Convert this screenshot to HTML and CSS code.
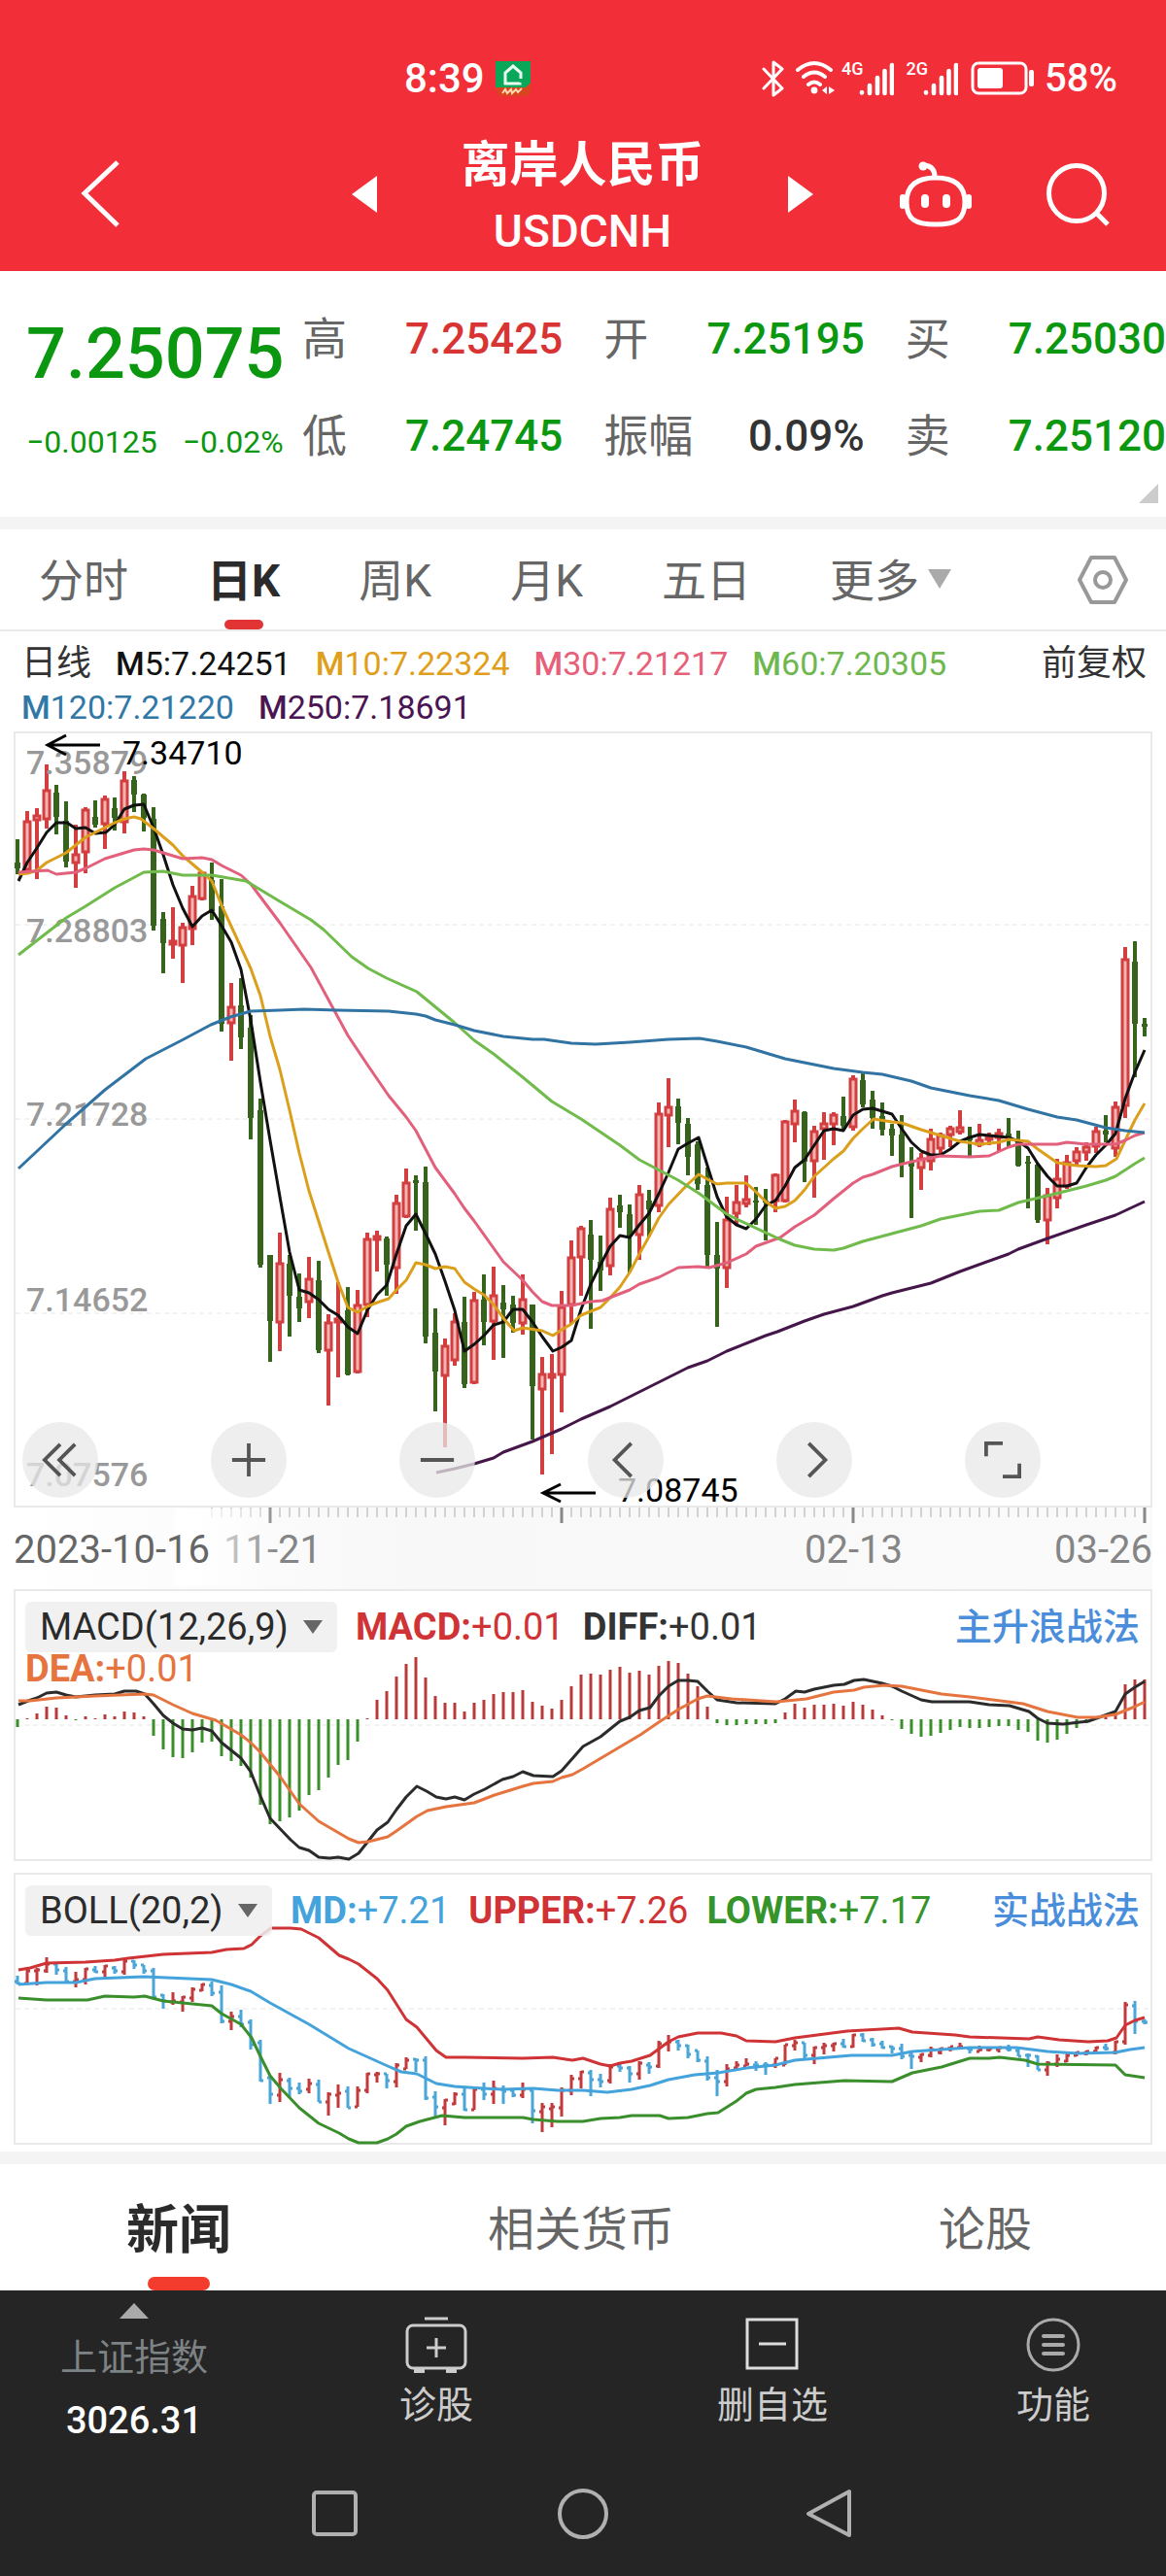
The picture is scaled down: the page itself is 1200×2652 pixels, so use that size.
FILE: index.html
```html
<!DOCTYPE html>
<html lang="zh-CN">
<head>
<meta charset="utf-8">
<meta name="viewport" content="width=device-width, initial-scale=1">
<title>离岸人民币 USDCNH</title>
<link rel="stylesheet" href="styles.css">
</head>
<body>
<header class="top">
  <div class="status">
    <span class="clock">8:39</span>
    <svg class="app-badge" viewBox="0 0 38 40" width="38" height="40"><path fill="#0aa65a" d="M1 2h36v28H1z"/><path fill="none" stroke="#e9fff3" stroke-width="3" d="M26 24v1H11V14l8-7 8 7v6"/><path fill="#d9431f" d="M1 29h31l5-5v10l-5 4H5z"/><path fill="none" stroke="#ffd9b0" stroke-width="2" d="M8 35l3-4 2 4 4-4 1 4 4-4 2 3 4-4"/></svg>
    <div class="status-icons">
      <svg viewBox="0 0 24 38" width="24" height="38" fill="none" stroke="#fff" stroke-width="3" stroke-linejoin="round" stroke-linecap="round"><path d="M2 9l19 20-9 7V2l9 7L2 29"/></svg>
      <svg class="wifi" viewBox="0 0 42 38" width="42" height="38" fill="none" stroke="#fff" stroke-width="4" stroke-linecap="round"><path d="M3 10q17-14 34 0M9 17q11-9 22 0M14 25q6-5 12 0"/><circle cx="20" cy="31" r="3.4" fill="#fff" stroke="none"/><path fill="#fff" stroke="none" d="M28 31l5-4v8zM35 27l6 4-6 4z"/></svg>
      <span class="net">4G</span>
      <svg class="bars" viewBox="0 0 36 36" width="36" height="36" stroke="#fff" stroke-width="4.6" stroke-linecap="round"><path d="M3 32v.5M11 25v8M19 17v16M26.500 10v23M34 4v29"/></svg>
      <span class="net">2G</span>
      <svg class="bars" viewBox="0 0 36 36" width="36" height="36" stroke="#fff" stroke-width="4.6" stroke-linecap="round"><path d="M3 32v.5M11 25v8M19 17v16M26.500 10v23M34 4v29"/></svg>
      <svg class="battery" viewBox="0 0 66 36" width="66" height="36"><rect x="2" y="2" width="55" height="31" rx="6" fill="none" stroke="#fff" stroke-width="3"/><rect x="7" y="7" width="26" height="21" rx="3" fill="#fff"/><rect x="60" y="9" width="5" height="17" rx="2" fill="#fff"/></svg>
      <span class="level">58%</span>
    </div>
  </div>
  <div class="titlebar">
    <div class="side left">
      <button aria-label="返回"><svg viewBox="0 0 40 70" width="40" height="70" fill="none" stroke="#fff" stroke-width="5"><path d="M38 2L4 34l34 33"/></svg></button>
      <button aria-label="上一个"><svg viewBox="0 0 26 40" width="26" height="40"><path fill="#fff" d="M26 1v38L0 20z"/></svg></button>
    </div>
    <h1>离岸人民币<small>USDCNH</small></h1>
    <div class="side right">
      <button aria-label="下一个"><svg viewBox="0 0 26 40" width="26" height="40"><path fill="#fff" d="M0 1v38l26-19z"/></svg></button>
      <button aria-label="助手"><svg viewBox="0 0 76 70" width="76" height="70" fill="none" stroke="#fff" stroke-width="5" stroke-linecap="round"><circle cx="25" cy="6" r="4.500" fill="#fff" stroke="none"/><path d="M26 5q11 1 11 12M38 18C18 18 8 26 8 43c0 18 9 23 30 23s30-5 30-23C68 26 58 18 38 18z"/><path stroke-width="6" d="M4 38v9M72 38v9"/><path stroke-width="8" d="M27 39v6M49 39v6"/></svg></button>
      <button aria-label="搜索"><svg viewBox="0 0 66 68" width="66" height="68" fill="none" stroke="#fff" stroke-width="5"><circle cx="32" cy="33" r="28.500"/><path d="M52 53l12 12"/></svg></button>
    </div>
  </div>
</header>

<main>
<section class="quote">
  <div class="last">
    <strong>7.25075</strong>
    <div class="change"><span>−0.00125</span><span>−0.02%</span></div>
  </div>
  <dl>
    <div><dt>高</dt><dd class="up">7.25425</dd></div>
    <div><dt>开</dt><dd>7.25195</dd></div>
    <div><dt>买</dt><dd>7.25030</dd></div>
    <div><dt>低</dt><dd>7.24745</dd></div>
    <div><dt>振幅</dt><dd class="flat">0.09%</dd></div>
    <div><dt>卖</dt><dd>7.25120</dd></div>
  </dl>
</section>

<nav class="periods">
  <button>分时</button>
  <button class="on">日K</button>
  <button>周K</button>
  <button>月K</button>
  <button>五日</button>
  <button class="more">更多</button>
  <button class="gear" aria-label="设置"><svg viewBox="0 0 54 52" width="54" height="52" fill="none" stroke="#999" stroke-width="4" stroke-linejoin="round"><path d="M15 3h24l12 23-12 23H15L3 26z"/><circle cx="27" cy="26" r="8"/></svg></button>
</nav>

<section class="averages">
  <ul>
    <li class="name">日线</li>
    <li class="m5"><b>M</b>5:7.24251</li>
    <li class="m10"><b>M</b>10:7.22324</li>
    <li class="m30"><b>M</b>30:7.21217</li>
    <li class="m60"><b>M</b>60:7.20305</li>
    <li class="m120"><b>M</b>120:7.21220</li>
    <li class="m250"><b>M</b>250:7.18691</li>
  </ul>
  <button>前复权</button>
</section>

<section class="stack kline">
  <svg class="plot" viewBox="14 753 1172 883">
    <defs>
      <linearGradient id="fade"><stop offset="0" stop-color="#fff"/><stop offset=".35" stop-color="#f8f8f8"/><stop offset="1" stop-color="#fafafa"/></linearGradient>
      <linearGradient id="mist"><stop offset="0" stop-color="#fff"/><stop offset=".2" stop-color="#fff" stop-opacity=".9"/><stop offset="1" stop-color="#fff" stop-opacity="0"/></linearGradient>
    </defs>
    <rect x="14" y="1552" width="1172" height="84" fill="url(#fade)"/>
    <path class="frame" d="M15 754H1185V1551H15z"/>
    <path class="grid" d="M16 952H1184M16 1152H1184M16 1352H1184"/>
    <g id="candles"></g>
    <g class="axis">
      <text x="27" y="797">7.35879</text><text x="27" y="970">7.28803</text><text x="27" y="1159">7.21728</text><text x="27" y="1350">7.14652</text><text x="27" y="1530">7.07576</text>
    </g>
    <g class="lines">
      <polyline class="m250" points="449,1516 468,1512 488,1507 508,1501 518,1495 548,1484 578,1471 598,1461 628,1448 658,1433 688,1418 708,1408 728,1401 748,1391 788,1375 800,1371 828,1360 848,1353 878,1345 908,1334 918,1331 958,1321 988,1309 1038,1291 1048,1286 1078,1275 1118,1261 1148,1251 1178,1237"/>
      <polyline class="m5" points="19,907 28,888 38,873 48,857 58,847 69,847 78,853 88,852 98,858 109,857 118,849 128,833 138,829 148,828 158,852 168,880 178,911 188,935 198,954 208,943 218,937 228,953 238,970 248,998 258,1050 268,1114 278,1174 288,1232 298,1289 308,1328 318,1331 328,1338 338,1348 348,1354 358,1366 368,1373 378,1349 388,1333 398,1323 408,1291 418,1262 428,1250 438,1270 448,1291 458,1319 468,1349 478,1391 488,1384 498,1375 508,1364 518,1361 528,1348 538,1348 548,1361 558,1376 569,1391 578,1387 588,1380 598,1348 608,1322 618,1302 628,1283 638,1272 648,1274 658,1261 668,1249 678,1229 688,1207 698,1183 708,1177 719,1171 728,1200 738,1232 748,1253 758,1261 768,1265 778,1255 788,1241 798,1236 808,1221 818,1202 828,1194 838,1179 848,1164 858,1162 868,1164 878,1148 888,1142 898,1141 908,1144 918,1147 928,1162 938,1176 948,1185 958,1189 968,1189 978,1183 988,1175 998,1171 1008,1168 1018,1169 1038,1171 1048,1175 1058,1182 1068,1198 1078,1211 1088,1221 1098,1221 1108,1218 1118,1202 1128,1189 1138,1179 1148,1167 1158,1131 1168,1104 1178,1081"/>
      <polyline class="m10" points="19,900 29,899 38,896 48,888 68,878 78,870 88,862 98,857 118,847 128,843 138,841 145,843 158,853 178,870 188,881 208,898 218,907 228,932 258,997 268,1025 278,1067 288,1101 298,1143 308,1187 318,1226 338,1289 348,1320 358,1346 368,1351 378,1345 388,1341 400,1337 408,1328 418,1318 428,1300 438,1302 448,1306 458,1304 468,1306 478,1320 488,1327 498,1333 508,1343 518,1357 529,1370 538,1367 558,1370 569,1375 578,1369 588,1363 598,1354 618,1346 628,1336 638,1325 648,1310 658,1291 668,1273 678,1254 688,1240 708,1219 719,1209 728,1214 738,1219 748,1218 768,1218 778,1227 788,1237 798,1244 808,1242 818,1236 828,1225 838,1211 848,1202 858,1193 868,1185 878,1172 888,1162 899,1152 918,1155 928,1156 948,1163 968,1169 988,1175 1008,1178 1028,1176 1038,1173 1058,1175 1068,1183 1078,1190 1088,1197 1108,1200 1128,1201 1138,1200 1149,1193 1158,1174 1168,1153 1178,1136"/>
      <polyline class="m30" points="19,898 49,896 58,900 78,898 88,894 108,884 138,875 148,874 158,875 188,884 208,883 218,885 228,891 248,901 258,910 288,950 320,996 358,1066 378,1096 400,1128 418,1150 428,1164 448,1202 468,1229 478,1244 488,1257 508,1285 518,1299 538,1318 548,1330 558,1340 568,1344 588,1344 608,1340 620,1339 630,1335 648,1328 658,1322 678,1315 698,1305 718,1304 730,1305 748,1300 768,1291 778,1283 803,1274 818,1263 838,1251 858,1234 878,1218 888,1212 898,1209 918,1201 938,1196 968,1190 998,1191 1018,1190 1038,1181 1048,1178 1088,1178 1098,1176 1118,1178 1148,1178 1158,1174 1168,1169 1178,1166"/>
      <polyline class="m60" points="19,983 68,945 88,933 118,914 148,898 168,897 188,901 218,901 253,907 288,928 320,947 333,957 362,985 379,997 398,1007 429,1021 468,1053 488,1071 508,1085 538,1109 568,1134 578,1140 598,1152 638,1179 658,1194 698,1215 720,1229 748,1250 758,1255 803,1276 818,1282 838,1286 858,1287 868,1285 888,1278 918,1270 948,1262 968,1255 1008,1247 1028,1246 1048,1238 1078,1231 1118,1221 1138,1215 1148,1211 1168,1198 1178,1192"/>
      <polyline class="m120" points="19,1203 67,1158 108,1122 150,1090 187,1071 217,1055 237,1047 258,1041 288,1040 313,1039 347,1040 400,1041 428,1044 438,1046 448,1050 468,1055 488,1061 518,1067 548,1070 560,1070 588,1074 613,1075 648,1073 688,1070 720,1069 738,1072 768,1078 788,1084 808,1090 828,1094 858,1100 888,1104 908,1106 938,1113 958,1120 998,1128 1028,1133 1058,1142 1088,1150 1108,1153 1138,1161 1158,1164 1178,1166"/>
    </g>
    <g class="extreme">
      <path d="M103 767H49M68 757L49 767l19 10"/><text x="126" y="787">7.34710</text>
      <path d="M613 1537H559M577 1528L559 1537l18 9"/><text x="636" y="1546">7.08745</text>
    </g>
    <g id="ruler"></g>
    <g class="dates">
      <text x="230" y="1609">11-21</text><text x="828" y="1609">02-13</text><text x="1085" y="1609">03-26</text>
      <rect x="180" y="1553" width="110" height="80" fill="url(#mist)"/>
      <text class="first" x="14" y="1609">2023-10-16</text>
    </g>
  </svg>
  <div class="tools">
    <button aria-label="快退"><svg viewBox="0 0 40 40"><path d="M20 3L3 20l17 17M36 3L19 20l17 17"/></svg></button>
    <button aria-label="放大"><svg viewBox="0 0 40 40"><path d="M2 20h36M20 2v36"/></svg></button>
    <button aria-label="缩小"><svg viewBox="0 0 40 40"><path d="M2 20h36"/></svg></button>
    <button aria-label="左移"><svg viewBox="0 0 40 40"><path d="M26 2L8 20l18 18"/></svg></button>
    <button aria-label="右移"><svg viewBox="0 0 40 40"><path d="M14 2l18 18-18 18"/></svg></button>
    <button aria-label="全屏"><svg viewBox="0 0 40 40"><path d="M2 16V2h18M38 24v14H20"/></svg></button>
  </div>
</section>

<section class="stack panel">
  <svg class="plot" viewBox="14 1636 1172 280">
    <path class="frame" d="M15 1637H1185V1915H15z"/>
    <path class="grid" d="M16 1776H1184"/>
    <g id="macd"></g>
    <g class="lines">
      <polyline stroke="#2b2b2b" points="19,1755 29,1751 38,1748 48,1743 58,1742 68,1745 78,1747 98,1745 118,1744 128,1741 140,1741 149,1744 158,1754 168,1766 178,1774 188,1780 198,1781 208,1779 218,1782 228,1794 238,1802 248,1810 258,1824 268,1849 278,1872 299,1894 308,1902 318,1905 328,1912 339,1913 348,1912 359,1914 369,1908 388,1884 399,1876 408,1863 418,1850 429,1839 439,1844 449,1850 459,1852 468,1850 478,1853 488,1847 499,1842 517,1832 528,1829 538,1824 549,1828 569,1829 578,1823 600,1798 618,1788 628,1780 638,1772 648,1768 658,1761 669,1758 678,1746 688,1736 698,1730 708,1730 718,1731 728,1741 738,1750 758,1753 798,1754 808,1749 819,1741 828,1742 838,1739 858,1735 869,1734 879,1730 889,1729 908,1733 918,1736 928,1741 948,1750 959,1752 998,1752 1018,1755 1039,1756 1059,1762 1068,1769 1078,1774 1094,1775 1120,1772 1148,1762 1158,1744 1168,1737 1178,1731"/>
      <polyline stroke="#e5743f" points="19,1751 31,1751 58,1748 98,1746 149,1744 158,1745 178,1755 198,1764 222,1771 248,1786 258,1794 268,1804 289,1830 308,1857 328,1875 359,1893 369,1897 379,1896 399,1891 408,1885 429,1870 440,1864 459,1860 488,1856 509,1848 538,1839 549,1836 569,1834 578,1830 589,1827 600,1821 659,1786 678,1773 698,1760 718,1749 728,1746 753,1749 799,1752 830,1749 858,1742 879,1740 889,1737 910,1735 928,1736 969,1744 998,1747 1053,1754 1078,1762 1109,1768 1128,1768 1148,1765 1168,1757 1178,1752"/>
    </g>
  </svg>
  <div class="panel-head">
    <div class="values">
      <span class="chip"><select aria-label="指标一"><option>MACD(12,26,9)</option></select></span>
      <span class="red"><b>MACD:</b>+0.01</span>
      <span><b>DIFF:</b>+0.01</span>
      <span class="orange wrap"><b>DEA:</b>+0.01</span>
    </div>
    <a href="#macd">主升浪战法</a>
  </div>
</section>

<section class="stack panel">
  <svg class="plot" viewBox="14 1928 1172 280">
    <path class="frame" d="M15 1929H1185V2207H15z"/>
    <path class="grid" d="M16 2068H1184"/>
    <g id="boll"></g>
    <g class="lines">
      <polyline stroke="#cf3335" points="19,2028 31,2026 48,2021 88,2020 118,2018 132,2016 168,2012 218,2010 233,2007 251,2006 259,2002 268,1993 279,1985 299,1985 310,1986 328,1995 349,2013 359,2017 369,2022 388,2037 399,2049 418,2079 429,2087 449,2111 459,2118 478,2118 538,2119 569,2118 589,2121 600,2119 618,2125 628,2127 638,2124 650,2122 669,2116 688,2102 698,2097 718,2093 742,2093 758,2096 768,2101 798,2102 818,2098 872,2091 925,2088 939,2092 983,2095 998,2097 1059,2099 1068,2097 1090,2100 1120,2102 1140,2101 1149,2098 1158,2085 1168,2080 1178,2077"/>
      <polyline stroke="#45a3dc" points="19,2043 48,2041 78,2041 98,2037 148,2035 218,2038 238,2043 258,2050 278,2062 318,2084 359,2109 399,2127 413,2133 429,2135 449,2145 468,2148 498,2150 517,2151 549,2150 574,2152 600,2152 625,2154 650,2151 669,2147 688,2141 715,2136 739,2134 768,2129 798,2126 818,2121 876,2116 918,2116 939,2112 998,2108 1046,2108 1078,2112 1109,2114 1148,2113 1163,2110 1178,2108"/>
      <polyline stroke="#3a8f2c" points="19,2057 48,2059 90,2059 108,2055 138,2056 149,2055 168,2060 218,2065 228,2073 248,2084 259,2098 268,2117 278,2137 289,2150 308,2170 328,2186 349,2196 359,2202 369,2206 388,2206 399,2202 408,2197 418,2189 432,2184 455,2178 478,2180 538,2180 549,2182 574,2184 600,2184 618,2181 638,2180 650,2178 679,2178 688,2181 708,2180 728,2176 739,2175 758,2163 768,2155 778,2151 798,2149 818,2146 869,2142 918,2143 939,2134 959,2130 969,2128 998,2119 1018,2119 1029,2118 1055,2121 1068,2125 1148,2126 1158,2136 1178,2139"/>
    </g>
  </svg>
  <div class="panel-head">
    <div class="values">
      <span class="chip"><select aria-label="指标二"><option>BOLL(20,2)</option></select></span>
      <span class="blue"><b>MD:</b>+7.21</span>
      <span class="red"><b>UPPER:</b>+7.26</span>
      <span class="green"><b>LOWER:</b>+7.17</span>
    </div>
    <a href="#boll">实战战法</a>
  </div>
</section>

<nav class="feeds">
  <button class="on">新闻</button>
  <button>相关货币</button>
  <button>论股</button>
</nav>
</main>

<footer>
  <div class="actions">
    <button class="index"><i></i><span>上证指数</span><strong>3026.31</strong></button>
    <button><svg viewBox="0 0 64 60" width="64" height="60" fill="none" stroke="#ccc" stroke-width="3"><rect x="2" y="10" width="60" height="44" rx="6"/><path d="M20 3h24M32 23v20M22 33h20"/><path stroke-width="4" d="M9 57h11M42 57h11"/></svg>诊股</button>
    <button><svg viewBox="0 0 64 60" width="64" height="60" fill="none" stroke="#ddd" stroke-width="3"><path d="M6 4h51v50H6zM18 29h28"/></svg>删自选</button>
    <button><svg viewBox="0 0 64 60" width="64" height="60" fill="none" stroke="#aaa" stroke-width="3"><circle cx="32" cy="30" r="26"/><path stroke-width="4" stroke-linecap="round" d="M22 21h20M22 30h20M22 39h20"/></svg>功能</button>
  </div>
  <div class="system">
    <button aria-label="最近任务"><svg viewBox="0 0 54 54" width="54" height="54"><rect x="5" y="5" width="43" height="43" rx="3"/></svg></button>
    <button aria-label="主屏幕"><svg viewBox="0 0 54 54" width="54" height="54"><circle cx="27" cy="27" r="24"/></svg></button>
    <button aria-label="后退"><svg viewBox="0 0 54 54" width="54" height="54"><path d="M46 4v45L4 27z"/></svg></button>
  </div>
</footer>
<script src="chart.js"></script>
</body>
</html>
```
FILE: styles.css
```css
* { box-sizing: border-box; }
body {
  margin: 0;
  background: #fff;
  color: #333;
  font-family: Roboto, "Noto Sans CJK SC", sans-serif;
}
button {
  padding: 0;
  border: 0;
  background: none;
  color: inherit;
  font: inherit;
}
svg { display: block; flex: none; }
b { font-weight: 500; }

.top { padding-bottom: 8px; background: #f22f39; color: #fff; }
.status {
  display: flex;
  align-items: center;
  padding: 54px 50px 0 416px;
  height: 108px;
}
.clock { font-size: 42px; font-weight: 500; line-height: 54px; }
.app-badge { margin-left: 10px; }
.status-icons { display: flex; align-items: center; margin-left: auto; }
.wifi { margin: 0 6px 0 10px; }
.net {
  align-self: flex-start;
  margin: 8px -5px 0 0;
  font-size: 18px;
  font-weight: 500;
  line-height: 18px;
}
.bars { margin-right: 13px; }
.level { margin-left: 10px; font-size: 40px; font-weight: 500; line-height: 54px; }
.titlebar {
  display: grid;
  grid-template-columns: 305px 1fr 331px;
  align-items: center;
  height: 163px;
  padding: 26px 58px 0 83px;
}
.side { display: flex; align-items: center; justify-content: space-between; padding-bottom: 6px; }
.right button:nth-child(2) { margin-left: 12px; }
.titlebar h1 {
  margin: 0;
  text-align: center;
  font-size: 50px;
  font-weight: 700;
  line-height: 70px;
}
.titlebar small { display: block; font-size: 46px; font-weight: 500; line-height: 66px; }

.quote {
  position: relative;
  display: grid;
  grid-template-columns: 284px 1fr;
  padding: 40px 0 53px 27px;
  border-bottom: 13px solid #f4f4f4;
  color: #0b970f;
}
.quote::after {
  content: "";
  position: absolute;
  right: 8px;
  bottom: 14px;
  border: 10px solid #ccc;
  border-top-color: transparent;
  border-left-color: transparent;
}
.last strong { display: block; font-size: 72px; font-weight: 500; line-height: 92px; }
.change { display: flex; gap: 26px; margin-top: 24px; font-size: 32px; line-height: 40px; }
.quote dl {
  display: grid;
  grid-template-columns: repeat(3, 1fr);
  gap: 40px 42px;
  margin: 0;
}
.quote dl div { display: flex; justify-content: space-between; line-height: 60px; }
.quote dt { color: #666; font-size: 46px; }
.quote dd { margin: 0; font-size: 44px; font-weight: 500; }
.quote .up { color: #d93434; }
.quote .flat { color: #333; }

.periods {
  display: flex;
  align-items: center;
  gap: 81px;
  height: 105px;
  padding: 0 38px 0 40px;
  border-bottom: 2px solid #ebebeb;
  color: #666;
  font-size: 46px;
}
.periods button { position: relative; height: 103px; padding-bottom: 6px; }
.periods .on { color: #2b2b2b; font-weight: 700; }
.periods .on::after {
  content: "";
  position: absolute;
  left: calc(50% - 20px);
  bottom: 0;
  width: 40px;
  height: 10px;
  border-radius: 5px;
  background: #e23335;
}
.more { display: flex; align-items: center; gap: 9px; }
.more::after {
  content: "";
  margin-top: 5px;
  border: 12px solid transparent;
  border-top: 20px solid #aaa;
  border-bottom: 0;
}
.periods .gear { margin-left: auto; padding: 0; }

.averages {
  display: flex;
  align-items: flex-start;
  padding: 11px 20px 2px 22px;
  font-size: 34px;
  line-height: 45px;
}
.averages button, .averages .name { font-size: 36px; }
.averages ul {
  display: flex;
  flex: 1;
  flex-wrap: wrap;
  gap: 0 25px;
  margin: 0;
  padding: 0;
  list-style: none;
}
.averages .m5 { color: #111; }
.averages .m10 { color: #df9f1c; }
.averages .m30 { color: #e7607a; }
.averages .m60 { color: #6fb74f; }
.averages .m120 { color: #3178a6; }
.averages .m250 { color: #4a1552; }

.stack { display: grid; margin: 0 14px; }
.stack > * { grid-area: 1 / 1; min-width: 0; }
.plot { width: 100%; height: auto; }
.frame { fill: none; stroke: #e9e9e9; stroke-width: 2; }
.grid { stroke: #e6e6e6; stroke-width: 1; stroke-dasharray: 5 4; }
.lines polyline { fill: none; stroke-width: 3; stroke-linejoin: round; }
.lines .m5 { stroke: #111; }
.lines .m10 { stroke: #dc9f1b; }
.lines .m30 { stroke: #e2607c; }
.lines .m60 { stroke: #70bb4c; }
.lines .m120 { stroke: #3174a3; }
.lines .m250 { stroke: #451649; }
.axis { fill: #999; font-size: 34px; font-weight: 500; }
.extreme { font-size: 34px; }
.extreme path { fill: none; stroke: #000; stroke-width: 3; }
.dates { fill: #858585; font-size: 40px; }
.dates .first { fill: #666; }
.tools {
  display: flex;
  align-self: end;
  gap: 116px;
  margin: 0 0 94px 9px;
}
.tools button {
  display: grid;
  place-items: center;
  width: 78px;
  height: 78px;
  border-radius: 50%;
  background: rgba(232, 232, 232, .75);
}
.tools svg { width: 38px; height: 38px; fill: none; stroke: #555; stroke-width: 4; }

.panel + .panel { margin-top: 12px; margin-bottom: 7px; }
.panel-head {
  display: flex;
  align-items: flex-start;
  justify-content: space-between;
  padding: 13px 13px 0 12px;
  font-size: 38px;
  line-height: 52px;
}
.panel-head b { font-weight: 700; }
.values { display: flex; flex: 1; flex-wrap: wrap; column-gap: 19px; }
.values .wrap { flex-basis: 100%; line-height: 34px; }
.panel-head a { color: #4a8edb; text-decoration: none; font-weight: 500; white-space: nowrap; }
.chip { position: relative; }
.chip select {
  display: block;
  height: 52px;
  padding: 0 50px 0 15px;
  border: 0;
  border-radius: 6px;
  appearance: none;
  background: rgba(238, 238, 238, .85);
  color: #2b2b2b;
  font: inherit;
}
.chip::after {
  content: "";
  position: absolute;
  right: 15px;
  top: 19px;
  border: 10px solid transparent;
  border-top: 14px solid #666;
  border-bottom: 0;
}
.red { color: #cf3335; }
.orange { color: #e5743f; }
.blue { color: #45a3dc; }
.green { color: #35942a; }

.feeds {
  display: grid;
  grid-template-columns: 368px 1fr 372px;
  height: 143px;
  border-top: 13px solid #f4f4f4;
  color: #666;
  font-size: 48px;
}
.feeds button { position: relative; padding-bottom: 4px; }
.feeds .on { color: #2b2b2b; font-size: 54px; font-weight: 700; }
.feeds .on::after {
  content: "";
  position: absolute;
  left: calc(50% - 32px);
  bottom: 0;
  width: 64px;
  height: 14px;
  border-radius: 7px;
  background: #f43c2e;
}

footer { padding-bottom: 37px; background: #252525; color: #ccc; font-size: 38px; }
.actions {
  display: grid;
  grid-template-columns: 276px 346px 1fr 232px;
  height: 172px;
  line-height: 56px;
}
.actions button { display: flex; flex-direction: column; align-items: center; padding-top: 26px; }
.actions svg { margin-bottom: 4px; }
.actions .index { padding-top: 13px; color: #7d8284; }
.index i { border: 15px solid transparent; border-bottom: 16px solid #aaa; border-top: 0; }
.index span { margin-top: 12px; }
.index strong { margin-top: 9px; color: #fff; font-weight: 500; }
.system { display: flex; justify-content: center; gap: 201px; padding-top: 31px; }
.system svg { fill: none; stroke: #b0b0b0; stroke-width: 4; stroke-linejoin: round; }
```
FILE: chart.js
```js
// One entry per trading day: direction, high, body top, body bottom, low
const days = `g864,888,894,900 r835,845,896,898 r832,839,845,905 r787,813,844,853 g808,816,841,859 g825,845,887,893
r849,879,889,914 r831,833,878,899 g824,841,849,852 r819,822,849,874 g821,832,842,855 r794,803,847,858
g799,803,818,836 g817,818,842,856 g831,843,953,958 g939,946,971,1002 r934,968,973,987 r950,954,974,1012
r912,922,957,973 r897,898,926,927 g888,906,938,947 g905,933,1054,1062 r1012,1036,1054,1092 g1007,1035,1068,1080
g1045,1058,1151,1173 g1131,1143,1302,1305 g1292,1292,1360,1402 r1269,1300,1362,1391 g1292,1301,1334,1376 g1311,1335,1347,1361
r1294,1316,1341,1357 g1298,1318,1390,1393 r1353,1361,1391,1447 r1320,1357,1362,1418 g1325,1349,1415,1416 r1328,1343,1413,1414
r1269,1275,1344,1356 r1267,1272,1277,1309 g1273,1275,1302,1334 r1230,1238,1306,1332 r1203,1217,1253,1254 g1210,1215,1218,1267
g1201,1217,1376,1383 g1347,1372,1412,1453 r1378,1385,1417,1490 r1352,1360,1401,1406 g1335,1361,1425,1429 r1330,1338,1424,1425
g1312,1338,1361,1385 r1304,1333,1361,1400 g1323,1341,1348,1398 g1334,1343,1362,1372 r1312,1337,1363,1374 g1343,1343,1427,1482
r1397,1414,1431,1518 r1394,1414,1419,1497 r1329,1345,1416,1454 r1277,1294,1344,1363 r1262,1264,1295,1334 g1256,1271,1297,1368
g1272,1299,1308,1329 r1233,1244,1304,1313 g1230,1241,1248,1264 g1240,1250,1273,1310 r1220,1229,1272,1297 g1225,1236,1245,1273
r1135,1146,1242,1248 r1110,1139,1149,1181 g1131,1139,1156,1178 g1151,1157,1191,1210 g1175,1178,1219,1225 g1202,1220,1292,1304
g1258,1292,1306,1366 r1232,1255,1306,1326 r1220,1237,1250,1262 r1210,1234,1240,1243 g1222,1236,1238,1261 g1224,1236,1238,1277
r1208,1209,1237,1248 r1153,1154,1237,1238 r1132,1143,1158,1176 g1144,1145,1196,1217 r1159,1164,1196,1233 r1145,1156,1163,1194
r1145,1147,1158,1179 g1129,1149,1159,1163 r1107,1110,1161,1164 g1104,1112,1137,1140 g1123,1132,1151,1162 g1135,1149,1163,1169
g1157,1162,1169,1190 g1148,1168,1199,1212 g1181,1196,1201,1254 r1187,1192,1203,1225 r1162,1172,1196,1205 r1166,1168,1183,1191
r1159,1161,1169,1181 r1143,1160,1166,1168 g1160,1170,1174,1190 r1157,1173,1179,1181 r1166,1170,1173,1179 r1162,1166,1172,1186
g1151,1167,1171,1181 g1164,1175,1200,1201 g1190,1196,1198,1244 g1198,1199,1256,1259 r1223,1230,1257,1281 r1193,1213,1234,1244
r1189,1196,1222,1224 r1181,1185,1196,1200 r1176,1180,1187,1195 r1160,1164,1181,1187 g1148,1164,1168,1176 r1134,1139,1183,1191
r975,987,1139,1151 g969,990,1054,1109 g1048,1054,1057,1067`.split(/\s+/).map(d => [d[0], ...d.slice(1).split(',').map(Number)]);

// Height of each MACD bar, positive above the zero line
const macd = [-8, 1, 6, 13, 12, 4, -1, 3, 1, 5, 3, 8, 7, 3, -17, -31, -39, -40, -34, -24, -23, -38, -43, -48, -60, -88, -108, -105,
  -101, -94, -78, -73, -60, -47, -42, -23, 1, 20, 29, 44, 57, 64, 43, 24, 17, 17, 8, 17, 20, 26, 28, 28, 30, 18, 14, 11, 20, 34, 46,
  47, 46, 51, 54, 48, 50, 46, 55, 60, 58, 47, 34, 13, -4, -6, -6, -5, -5, -5, -4, 7, 16, 12, 15, 15, 16, 14, 18, 15, 10, 4, -1,
  -10, -15, -18, -17, -14, -11, -8, -9, -9, -8, -7, -7, -11, -13, -22, -24, -21, -15, -9, -4, 0, 2, 5, 36, 41, 41];

const put = (id, html) => { document.getElementById(id).innerHTML = html; };
const path = (d, color, width) => `<path d="${d}" stroke="${color}" stroke-width="${width}" fill="none"/>`;
const dayX = i => 18 + i * 10;

put('candles', days.map(([dir, high, top, bottom, low], i) => {
  const x = dayX(i);
  if (dir === 'g') {
    return path(`M${x} ${high}V${low}`, '#37641c', 4) + path(`M${x} ${top}V${Math.max(bottom, top + 2)}`, '#37641c', 6);
  }
  return path(`M${x} ${high}V${top}M${x} ${bottom}V${low}`, '#d23f41', 4) +
    `<rect x="${x - 3}" y="${top + 1}" width="6" height="${Math.max(bottom - top - 2, 2)}" fill="#f5b5b3" stroke="#d23f41" stroke-width="3"/>`;
}).join(''));

put('macd', macd.map((v, i) => path(`M${dayX(i)} 1770V${1770 - v}`, v > 0 ? '#b93a3b' : '#3b8f2a', 3)).join(''));

const scale = y => Math.round(y * 0.246 + 1821.6);
put('boll', days.map(([dir, high, top, bottom, low], i) => {
  const x = dayX(i);
  const open = scale(dir === 'g' ? top : bottom);
  const close = scale(dir === 'g' ? bottom : top);
  return path(`M${x} ${scale(high)}V${scale(low)}M${x - 3} ${open}H${x}M${x} ${close}H${x + 3}`, dir === 'g' ? '#4aa5d8' : '#c23a3c', 3);
}).join(''));

let ticks = '';
for (let i = 20; i < days.length; i++) {
  const major = i % 30 === 26;
  ticks += path(`M${dayX(i)} 1552V${major ? 1568 : 1562}`, major ? '#888' : '#aaa', major ? 3 : 1);
}
put('ruler', ticks);
```
